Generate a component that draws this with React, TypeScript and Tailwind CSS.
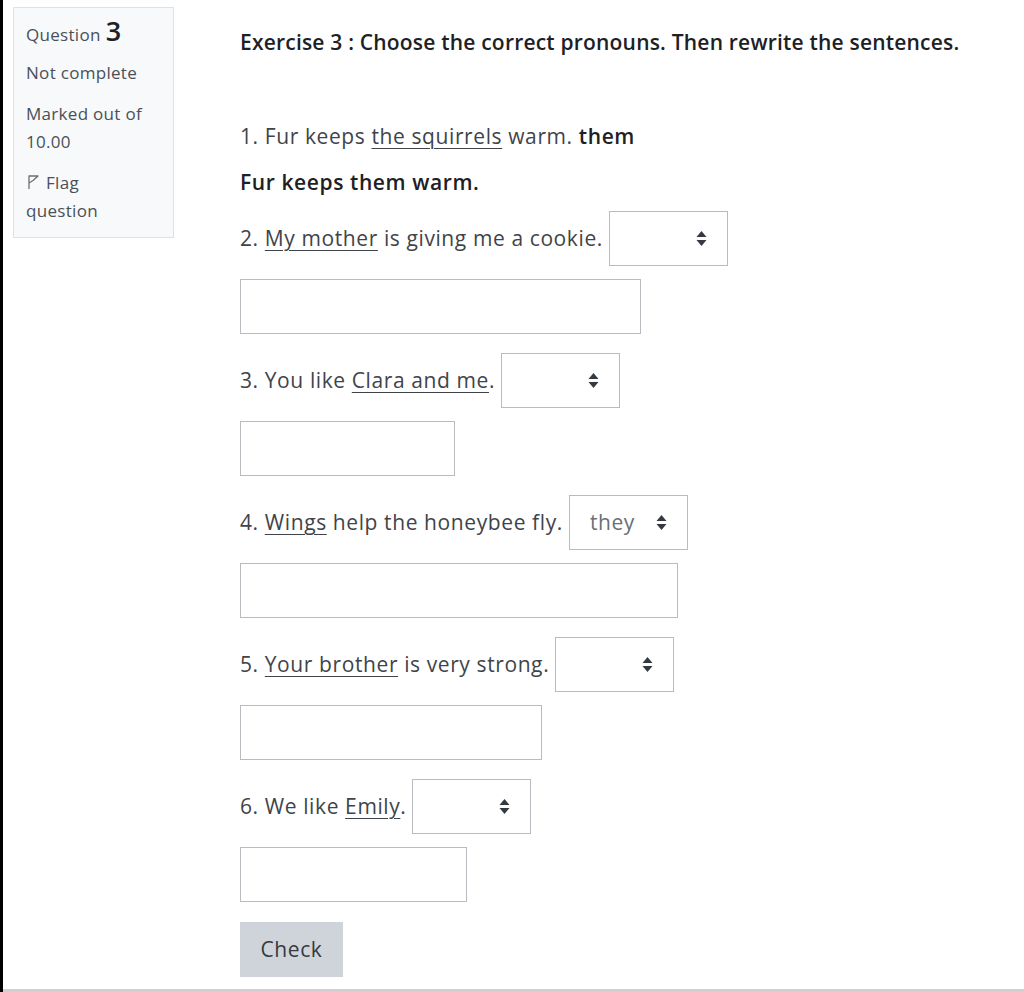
const font = { fontFamily: '"Open Sans", Lato, sans-serif' };

const Arrows = () => (
  <svg width="11" height="17" viewBox="0 0 11 17" className="shrink-0">
    <path d="M0.5 7 L5.5 1 L10.5 7 Z" fill="#343a40" />
    <path d="M0.5 10 L5.5 16 L10.5 10 Z" fill="#343a40" />
  </svg>
);

const Select = ({ value = '' }: { value?: string }) => (
  <div className="ml-[6px] flex h-[55px] w-[119px] shrink-0 items-center justify-between border border-[#b8bcc0] bg-white pl-[20px] pr-[20px] text-[#6a7077]">
    <span>{value}</span>
    <Arrows />
  </div>
);

const Answer = ({ w }: { w: string }) => (
  <div className={`mt-[13px] h-[55px] border border-[#b8bcc0] bg-white ${w}`} />
);

type Item = { pre: string; u: string; post: string; value?: string; w: string };

const items: Item[] = [
  { pre: '2. ', u: 'My mother', post: ' is giving me a cookie.', w: 'w-[401px]' },
  { pre: '3. You like ', u: 'Clara and me', post: '.', w: 'w-[215px]' },
  { pre: '4. ', u: 'Wings', post: ' help the honeybee fly.', value: 'they', w: 'w-[438px]' },
  { pre: '5. ', u: 'Your brother', post: ' is very strong.', w: 'w-[302px]' },
  { pre: '6. We like ', u: 'Emily', post: '.', w: 'w-[227px]' },
];

export default function App() {
  return (
    <div className="flex min-h-[992px] w-[1024px] bg-white text-[#495057]" style={font}>
      <div className="w-[3px] shrink-0 bg-black" />
      <div className="flex flex-1 flex-col border-b-[3px] border-[#d0d0d0]">
        <div className="flex flex-1 items-start">
          <aside className="ml-[10px] mt-[7px] w-[161px] shrink-0 border border-[#dee2e6] bg-[#f8f9fa] px-[12px] pb-[12px] pt-[9px] text-[17px] leading-[28px] tracking-[0.3px] text-[#495057]">
            <div className="flex items-baseline gap-[5px]">
              <span>Question</span>
              <span className="text-[27px] font-semibold text-[#1d2125]">3</span>
            </div>
            <div className="mt-[10px]">Not complete</div>
            <div className="mt-[13px]">Marked out of 10.00</div>
            <div className="mt-[13px]">
              <svg width="14" height="16" viewBox="0 0 14 16" className="mr-[6px] inline-block align-[-1px]">
                <path d="M3 15 V2 H12 L7 6.5 L3 9" fill="none" stroke="#6a7077" strokeWidth="1.3" strokeLinejoin="round" />
              </svg>
              Flag
              <br />
              question
            </div>
          </aside>

          <main className="ml-[66px] flex flex-col pt-[27px] text-[21px] tracking-[0.6px] text-[#3f444a]">
            <h1 className="text-[21px] font-semibold leading-[30px] tracking-[0.2px] text-[#1d2125]">
              Exercise 3 : Choose the correct pronouns. Then rewrite the sentences.
            </h1>
            <p className="mt-[64px] leading-[30px]">
              1. Fur keeps <span className="underline underline-offset-[4px] decoration-1">the squirrels</span> warm.{' '}
              <span className="font-semibold text-[#1d2125]">them</span>
            </p>
            <p className="mt-[16px] font-semibold leading-[30px] text-[#1d2125]">Fur keeps them warm.</p>

            <div className="mt-[14px] flex flex-col">
              {items.map((it) => (
                <div key={it.u} className="mb-[19px] flex flex-col">
                  <div className="flex h-[55px] items-center">
                    <span>
                      {it.pre}
                      <span className="underline underline-offset-[4px] decoration-1">{it.u}</span>
                      {it.post}
                    </span>
                    <Select value={it.value} />
                  </div>
                  <Answer w={it.w} />
                </div>
              ))}
            </div>

            <button className="mt-[1px] h-[55px] w-[103px] bg-[#ced4da] text-[21px] text-[#343a40]">
              Check
            </button>
          </main>
        </div>
      </div>
    </div>
  );
}
